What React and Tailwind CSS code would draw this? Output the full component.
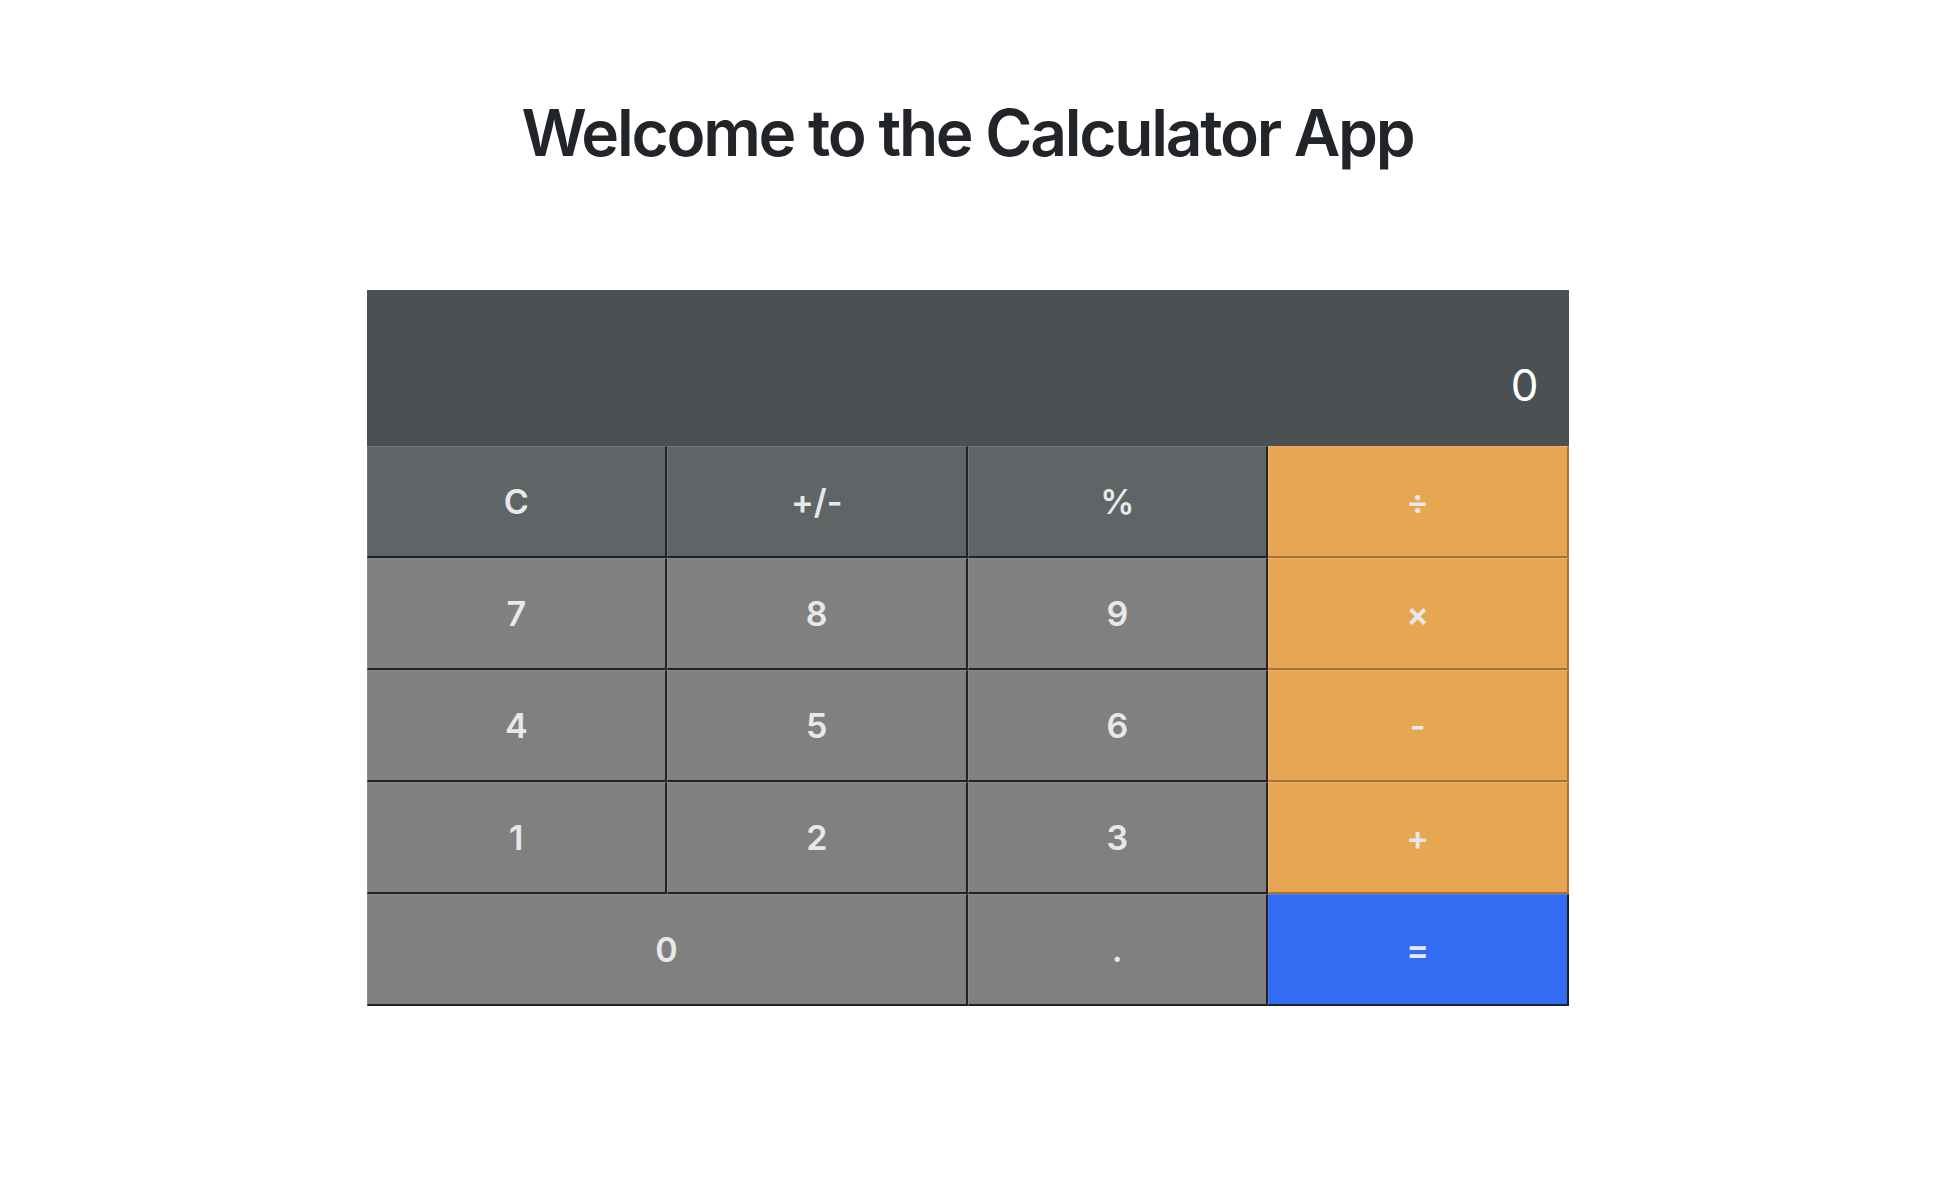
import React, { useState } from 'react'

const keys = [
  { label: 'C', kind: 'fn' },
  { label: '+/-', kind: 'fn' },
  { label: '%', kind: 'fn' },
  { label: '÷', kind: 'op' },
  { label: '7' }, { label: '8' }, { label: '9' },
  { label: '×', kind: 'op' },
  { label: '4' }, { label: '5' }, { label: '6' },
  { label: '-', kind: 'op' },
  { label: '1' }, { label: '2' }, { label: '3' },
  { label: '+', kind: 'op' },
  { label: '0', wide: true },
  { label: '.' },
  { label: '=', kind: 'eq' },
]

const styles = {
  fn: 'bg-[#5f6466] border-t-[#6f7476] border-l-[#6f7476] border-r-[#222222] border-b-[#222222]',
  num: 'bg-[#808080] border-t-[#8a8a8a] border-l-[#8a8a8a] border-r-[#222222] border-b-[#222222]',
  op: 'bg-[#e7a752] border-t-[#eab064] border-l-[#eab064] border-r-[#a47437] border-b-[#a47437]',
  eq: 'bg-[#326cf3] border-t-[#4a7ef5] border-l-[#4a7ef5] border-r-[#222222] border-b-[#222222]',
}

export default function App() {
  const [display, setDisplay] = useState('0')

  const press = (label) => {
    if (label === 'C') return setDisplay('0')
    if (/[0-9]/.test(label)) return setDisplay(d => (d === '0' ? label : d + label))
  }

  return (
    <div className="min-h-screen bg-white pr-[23px]" style={{ fontFamily: 'Inter, "Liberation Sans", sans-serif' }}>
      <h1 className="pt-[94px] text-center text-[64px] leading-[78px] font-semibold tracking-[-0.035em] text-[#212529]">
        Welcome to the Calculator App
      </h1>

      <div className="mx-auto mt-[118px] w-[1202px]">
        {/* Display */}
        <div className="flex h-[156px] items-end justify-end bg-[#4b5053] pr-[30px] pb-[39px]">
          <span className="text-[44px] leading-none font-normal text-white">{display}</span>
        </div>

        {/* Keypad */}
        <div className="grid grid-cols-4">
          {keys.map(({ label, kind, wide }) => (
            <button
              key={label}
              onClick={() => press(label)}
              className={[
                'flex h-[112px] items-center justify-center border-t border-l border-r-2 border-b-2 text-[34px] font-semibold text-[#e8e8e8]',
                styles[kind || 'num'],
                wide ? 'col-span-2' : '',
              ].join(' ')}
            >
              {label}
            </button>
          ))}
        </div>
      </div>
    </div>
  )
}
